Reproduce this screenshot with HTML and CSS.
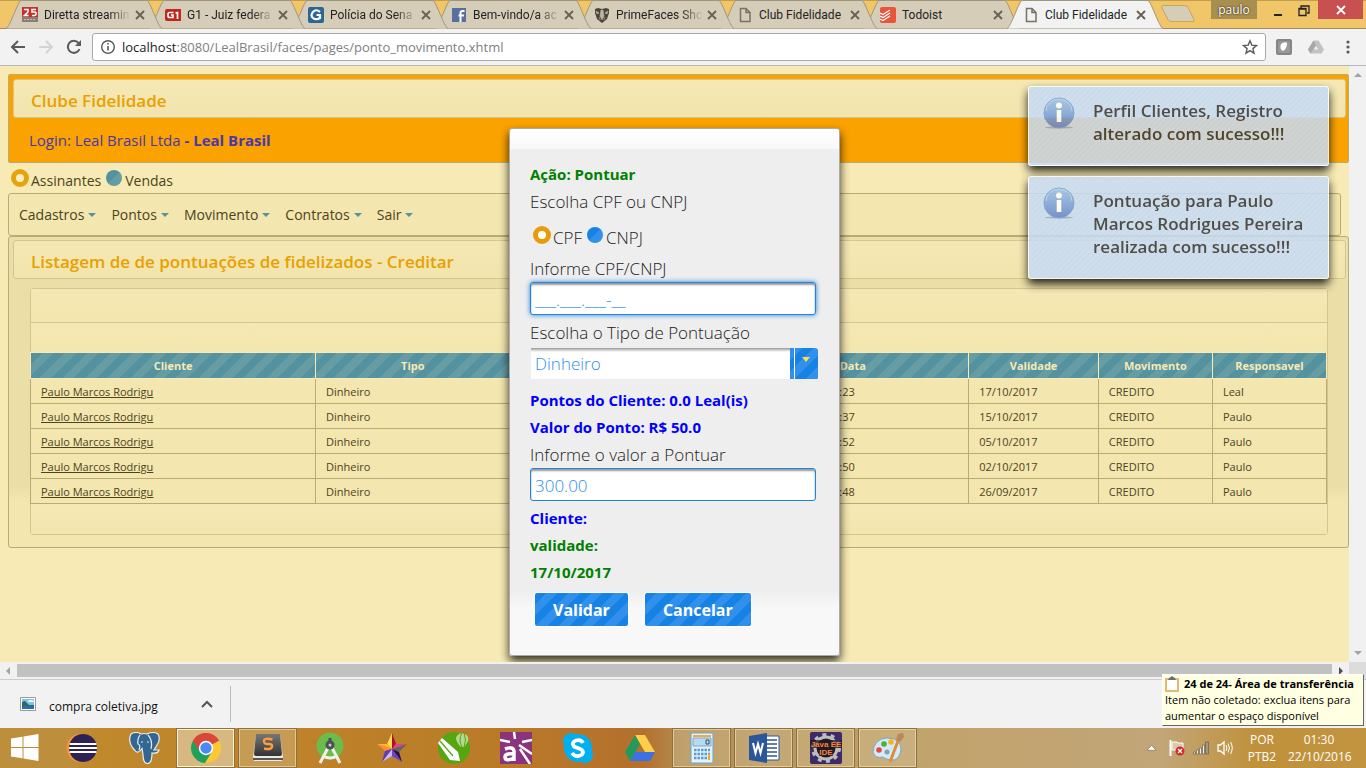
FILE: index.html
```html
<!DOCTYPE html>
<html lang="pt-BR">
<head>
<meta charset="utf-8">
<title>Club Fidelidade</title>
<link rel="stylesheet" href="styles.css">
</head>
<body>
<svg class="defs" aria-hidden="true">
  <defs>
    <linearGradient id="infoFill" x1="0" y1="0" x2="0" y2="1"><stop offset="0" stop-color="#9cc6ec"/><stop offset="1" stop-color="#5f82d0"/></linearGradient>
    <linearGradient id="keyFill" x1="0" y1="0" x2="0" y2="1"><stop offset="0" stop-color="#777"/><stop offset="1" stop-color="#333"/></linearGradient>
    <symbol id="tabshape" viewBox="0 0 156 29" preserveAspectRatio="none"><path d="M0 28.500C4 27 12 1 15 .500H141C144 1 152 27 156 28.500" /></symbol>
    <symbol id="x" viewBox="0 0 10 10"><path d="M1 1l8 8M9 1l-8 8" stroke="#666055" stroke-width="1.800"/></symbol>
    <symbol id="page" viewBox="0 0 16 16"><path d="M3.500 1.500h5.500l4 4v9H3.500zM9 1.500v4h4" fill="none" stroke="#777166" stroke-width="1.500"/></symbol>
    <symbol id="info" viewBox="0 0 32 32"><ellipse cx="16" cy="30.500" rx="14" ry="1" fill="#99a9bd"/><circle cx="16" cy="16" r="15" fill="url(#infoFill)" stroke="#6e9bd4"/><path d="M3 14a13 12 0 0 1 26 0" fill="none" stroke="#b5d4f1"/><circle cx="16" cy="8.500" r="3" fill="#fff"/><path d="M13.700 13h4.600v12h-4.600z" fill="#fff"/></symbol>
  </defs>
</svg>

<header class="tabstrip">
  <nav class="tabs" aria-label="Abas">
    <div class="tab"><svg class="shape"><use href="#tabshape"/></svg>
      <svg class="fav" viewBox="0 0 16 16"><path fill="#c9302b" d="M0 0h16v10H0z"/><path fill="#85817a" d="M0 10h16v5H0z"/><path d="M2 12.500h12" stroke="#c2bba9" stroke-dasharray="2 1"/><path d="M2 2.500h4V5L2.500 8.500H6.500M14 2.500h-4V5h2.500c2.500 0 2 3.500 0 3.500H10" fill="none" stroke="#fff" stroke-width="1.600"/></svg>
      <a class="fade" href="#">Diretta streamin</a><button aria-label="Fechar"><svg><use href="#x"/></svg></button></div>
    <div class="tab"><svg class="shape"><use href="#tabshape"/></svg>
      <svg class="fav" viewBox="0 0 16 16"><path d="M2 2h14v12H2a2 2 0 0 1-2-2V4a2 2 0 0 1 2-2z" fill="#c4241c"/><path d="M8.500 5.500h-4q-1.500 0-1.500 2v1q0 2 1.500 2h3.500V8H6M10.500 6l2-.500V12" fill="none" stroke="#fff" stroke-width="1.700"/></svg>
      <a class="fade" href="#">G1 - Juiz federa</a><button aria-label="Fechar"><svg><use href="#x"/></svg></button></div>
    <div class="tab"><svg class="shape"><use href="#tabshape"/></svg>
      <svg class="fav" viewBox="0 0 16 16"><rect width="16" height="16" rx="2" fill="#2b6795"/><path d="M12 5Q8 1.500 5 5t0 6q3 2.500 7 0V8H8.500" fill="none" stroke="#fff" stroke-width="2.200"/></svg>
      <a class="fade" href="#">Polícia do Sena</a><button aria-label="Fechar"><svg><use href="#x"/></svg></button></div>
    <div class="tab"><svg class="shape"><use href="#tabshape"/></svg>
      <svg class="fav" viewBox="0 0 16 16"><rect x="1" y="1" width="14" height="14" fill="#58709f"/><path d="M9.500 15V6q0-2 2-2h2M7.500 8.500h5.500" fill="none" stroke="#fff" stroke-width="2"/></svg>
      <a class="fade" href="#">Bem-vindo/a ac</a><button aria-label="Fechar"><svg><use href="#x"/></svg></button></div>
    <div class="tab"><svg class="shape"><use href="#tabshape"/></svg>
      <svg class="fav" viewBox="0 0 16 16"><path d="M1 2l3-1 4 1 4-1 3 1v4l-2 6-5 4-5-4L1 6z" fill="#48443c"/><path d="M7 3h2l1 6-2 4-2-4zM2 4l3 2-2 1zM14 4l-3 2 2 1zM5 10l1 3M11 10l-1 3" fill="#bdb49f" stroke="#bdb49f" stroke-width=".6"/></svg>
      <a class="fade" href="#">PrimeFaces Sho</a><button aria-label="Fechar"><svg><use href="#x"/></svg></button></div>
    <div class="tab"><svg class="shape"><use href="#tabshape"/></svg>
      <svg class="fav"><use href="#page"/></svg>
      <a href="#">Club Fidelidade</a><button aria-label="Fechar"><svg><use href="#x"/></svg></button></div>
    <div class="tab"><svg class="shape"><use href="#tabshape"/></svg>
      <svg class="fav" viewBox="0 0 16 16"><rect width="16" height="16" rx="2" fill="#e8553a"/><path d="M0 6l3 1.500L10 3M0 9l3 1.500L10 6M0 12l3 1.500L10 9" fill="none" stroke="#fff" stroke-width="1.200"/></svg>
      <a href="#">Todoist</a><button aria-label="Fechar"><svg><use href="#x"/></svg></button></div>
    <div class="tab active"><svg class="shape"><use href="#tabshape"/></svg>
      <svg class="fav"><use href="#page"/></svg>
      <a href="#">Club Fidelidade</a><button aria-label="Fechar"><svg><use href="#x"/></svg></button></div>
    <button class="newtab" aria-label="Nova aba"><svg viewBox="0 0 36 18"><path d="M3 .500h22q2 0 3 2l6 12q1 2-1 2H11q-2 0-3-2L2 3q-1-2.500 1-2.500z" fill="#d6cdb8" stroke="#c7a556"/></svg></button>
  </nav>
  <div class="window">
    <button class="user">paulo</button>
    <button class="min" aria-label="Minimizar"><svg viewBox="0 0 10 14"><path d="M1 12h8" stroke="#222" stroke-width="2"/></svg></button>
    <button class="max" aria-label="Restaurar"><svg viewBox="0 0 12 14"><path d="M3 5V3h8v7H9M1 5.500h7v7H1zM1 6h7" fill="none" stroke="#222" stroke-width="1.300"/></svg></button>
    <button class="close" aria-label="Fechar janela"><svg viewBox="0 0 10 10"><path d="M1 1l8 8M9 1l-8 8" stroke="#fff" stroke-width="1.800"/></svg></button>
  </div>
</header>

<div class="toolbar">
  <button aria-label="Voltar"><svg viewBox="0 0 16 16"><path d="M15 8H2M8 2L2 8l6 6" fill="none" stroke="#5a5a5a" stroke-width="2"/></svg></button>
  <button aria-label="Avançar"><svg viewBox="0 0 16 16"><path d="M1 8h13M8 2l6 6-6 6" fill="none" stroke="#d3d3d3" stroke-width="2"/></svg></button>
  <button aria-label="Recarregar"><svg viewBox="0 0 16 16"><path d="M13.500 10A6 6 0 1 1 12.500 4L14 5.500" fill="none" stroke="#5a5a5a" stroke-width="2"/><path d="M15 1v6H9z" fill="#5a5a5a"/></svg></button>
  <div class="address">
    <svg class="i16" viewBox="0 0 16 16"><circle cx="8" cy="8" r="6.300" fill="none" stroke="#5a5a5a" stroke-width="1.400"/><path d="M8 7v4.500M8 4v1.600" stroke="#5a5a5a" stroke-width="1.600"/></svg>
    <a href="#"><b>localhost</b>:8080/LealBrasil/faces/pages/ponto_movimento.xhtml</a>
    <svg class="i16" viewBox="0 0 16 16"><path d="M8 1.800l1.800 4.300 4.700.400-3.600 3.100 1.100 4.600L8 11.700l-4 2.500 1.100-4.600-3.600-3.100 4.700-.4z" fill="none" stroke="#5a5a5a" stroke-width="1.400"/></svg>
  </div>
  <div class="exts">
    <svg class="i16" viewBox="0 0 16 16"><rect width="16" height="16" rx="2" fill="#858585"/><rect x="2" y="2" width="12" height="12" rx="2" fill="#999"/><path d="M5 5q4-3 6-1 0 6-4 8-4-2-2-7z" fill="#fff"/></svg>
    <svg class="i16" viewBox="0 0 16 16"><path d="M5.500 1.500h5l5.500 9-2.500 4h-11L0 10.500z" fill="#c2c2c2"/><path d="M5.500 1.500L0 10.500l2.500 4L8 6z" fill="#a8a8a8"/><path d="M8 7l2 3.500H6z" fill="#f2f2f2"/></svg>
    <svg class="i16" viewBox="0 0 16 16"><g fill="#5a5a5a"><circle cx="8" cy="3" r="1.600"/><circle cx="8" cy="8" r="1.600"/><circle cx="8" cy="13" r="1.600"/></g></svg>
  </div>
</div>

<div class="viewport">
  <main class="page">
    <section class="banner">
      <h1 class="title">Clube Fidelidade</h1>
      <p>Login: Leal Brasil Ltda <b>- Leal Brasil</b></p>
    </section>
    <div class="modes">
      <input type="radio" name="modo" id="assinantes" checked><label for="assinantes">Assinantes</label>
      <input type="radio" name="modo" id="vendas"><label for="vendas">Vendas</label>
    </div>
    <nav class="menu">
      <a href="#">Cadastros</a><a href="#">Pontos</a><a href="#">Movimento</a><a href="#">Contratos</a><a href="#">Sair</a>
    </nav>
    <section class="panel">
      <h2 class="title">Listagem de de pontuações de fidelizados - Creditar</h2>
      <div class="grid">
        <div class="bar first"></div>
        <div class="bar"></div>
        <table>
          <colgroup><col class="c1"><col class="c2"><col class="c3"><col class="c4"><col class="c5"><col class="c6"><col class="c7"></colgroup>
          <thead><tr><th>Cliente</th><th>Tipo</th><th></th><th>Data</th><th>Validade</th><th>Movimento</th><th>Responsavel</th></tr></thead>
          <tbody>
            <tr><td><a href="#">Paulo Marcos Rodrigu</a></td><td>Dinheiro</td><td></td><td class="time">:23</td><td>17/10/2017</td><td>CREDITO</td><td>Leal</td></tr>
            <tr><td><a href="#">Paulo Marcos Rodrigu</a></td><td>Dinheiro</td><td></td><td class="time">:37</td><td>15/10/2017</td><td>CREDITO</td><td>Paulo</td></tr>
            <tr><td><a href="#">Paulo Marcos Rodrigu</a></td><td>Dinheiro</td><td></td><td class="time">:52</td><td>05/10/2017</td><td>CREDITO</td><td>Paulo</td></tr>
            <tr><td><a href="#">Paulo Marcos Rodrigu</a></td><td>Dinheiro</td><td></td><td class="time">:50</td><td>02/10/2017</td><td>CREDITO</td><td>Paulo</td></tr>
            <tr><td><a href="#">Paulo Marcos Rodrigu</a></td><td>Dinheiro</td><td></td><td class="time">:48</td><td>26/09/2017</td><td>CREDITO</td><td>Paulo</td></tr>
          </tbody>
        </table>
        <div class="bar last"></div>
      </div>
    </section>

    <form class="dialog" role="dialog" aria-label="Pontuar">
      <div class="dialog-head"></div>
      <div class="dialog-body">
        <p class="ok">Ação: Pontuar</p>
        <p>Escolha CPF ou CNPJ</p>
        <div class="kinds">
          <input type="radio" name="doc" id="cpf" checked><label for="cpf">CPF</label>
          <input type="radio" name="doc" id="cnpj"><label for="cnpj">CNPJ</label>
        </div>
        <label class="row" for="numero">Informe CPF/CNPJ</label>
        <input class="field focus" type="text" id="numero" value="___.___.___-__">
        <label class="row" for="tipo">Escolha o Tipo de Pontuação</label>
        <div class="combo">
          <select id="tipo"><option>Dinheiro</option></select>
          <svg viewBox="0 0 8 5"><path d="M0 0h8L4 5z" fill="#ffe04a"/></svg>
        </div>
        <p class="strong">Pontos do Cliente: 0.0 Leal(is)</p>
        <p class="strong">Valor do Ponto: R$ 50.0</p>
        <label class="row" for="valor">Informe o valor a Pontuar</label>
        <input class="field" type="text" id="valor" value="300.00">
        <p class="strong">Cliente:</p>
        <p class="ok">validade:</p>
        <p class="ok">17/10/2017</p>
        <div class="actions"><button type="button">Validar</button><button type="button">Cancelar</button></div>
      </div>
    </form>

    <div class="toasts">
      <div class="toast"><svg><use href="#info"/></svg><p>Perfil Clientes, Registro alterado com sucesso!!!</p></div>
      <div class="toast"><svg><use href="#info"/></svg><p>Pontuação para Paulo Marcos Rodrigues Pereira realizada com sucesso!!!</p></div>
    </div>
  </main>
  <div class="vscroll"><svg viewBox="0 0 8 4"><path d="M4 0l4 4H0z" fill="#a3a3a3"/></svg><svg viewBox="0 0 8 4"><path d="M0 0h8L4 4z" fill="#a3a3a3"/></svg></div>
  <div class="hscroll"><svg viewBox="0 0 4 8"><path d="M4 0v8L0 4z" fill="#a3a3a3"/></svg><span></span><svg viewBox="0 0 4 8"><path d="M0 0v8l4-4z" fill="#505050"/></svg></div>
  <div class="corner"></div>
</div>

<div class="downloads">
  <svg class="i16" viewBox="0 0 16 14"><path d="M.5.5h15v13H.5z" fill="#fff" stroke="#999"/><path d="M2 2h12v10H2z" fill="#7fc0ec"/><path d="M2 5l3-1 4 4h5v2H2z" fill="#2d6b62"/><path d="M2 9h12v3H2z" fill="#286fa9"/><path d="M8 4q3-2 6 0v1H8z" fill="#eef8ff"/></svg>
  <a href="#">compra coletiva.jpg</a>
  <button aria-label="Opções"><svg viewBox="0 0 12 8"><path d="M1 7l5-5 5 5" fill="none" stroke="#555" stroke-width="2"/></svg></button>
</div>

<footer class="taskbar">
  <button class="start" aria-label="Iniciar"><svg viewBox="0 0 28 28"><path d="M0 4.500l11.500-1.800V13H0zM12.500 2.500L27.500 0v13h-15zM0 14h11.500v10.300L0 22.500zM12.500 14h15v13l-15-2.500z" fill="#fff"/></svg></button>
  <button class="app" aria-label="Eclipse"><svg viewBox="0 0 32 32"><circle cx="15" cy="16" r="14.500" fill="#f79232"/><circle cx="17" cy="16" r="14" fill="#2c2255"/><path d="M3.500 12h27M3 16h28M3.500 20h27" stroke="#fff" stroke-width="2"/></svg></button>
  <button class="app" aria-label="PostgreSQL"><svg viewBox="0 0 32 32"><path d="M3 2Q8-1 13 2q3-1 6 0 6-3 11 0 3 5-1 11l-3 5 5 0q-1 4-7 3 0 10-4 10.500-5 .5-5-9l-1-6q-4 6-7 2Q-1 10 3 2z" fill="#336791" stroke="#e8eef3" stroke-width="1.200"/><path d="M12 3q-3 4-2 9 3 1 1 6M20 3q5 5 3 14M13 10h2M19 10h2" fill="none" stroke="#e8eef3" stroke-width="1.200"/></svg></button>
  <button class="app open on" aria-label="Chrome"><svg viewBox="0 0 32 32"><circle cx="16" cy="16" r="15" fill="#fcc934"/><path d="M16 16L3 8.500a15 15 0 0 1 26 0z" fill="#d9463a"/><path d="M3 8.500A15 15 0 0 0 15 31l7-11.500-6-3.500z" fill="#1fa15d"/><path d="M16 9h13a15 15 0 0 0-26-.500L9 18z" fill="#d9463a"/><circle cx="16" cy="16" r="7.200" fill="#fff"/><circle cx="16" cy="16" r="5.700" fill="#4a8af4"/></svg></button>
  <button class="app open" aria-label="Sublime Text"><svg viewBox="0 0 32 32"><path d="M4 3h24l3 22-1 4H2l-1-4z" fill="#e9e9e9"/><path d="M1 26h30v2H1z" fill="#555"/><path d="M4 2h24l2 20q0 2-2 2H4q-2 0-2-2z" fill="url(#keyFill)"/><path d="M20.500 7.500Q12 5.500 12 9t4.500 3q4.500 0 3.500 3t-8 1.500" fill="none" stroke="#ff9c3d" stroke-width="2.400"/></svg></button>
  <button class="app" aria-label="Android Studio"><svg viewBox="0 0 32 32"><circle cx="16" cy="14" r="13.500" fill="#6dba4d"/><path d="M15 14L6 31M17 14l9 17M9 24q7 4 14 0" fill="none" stroke="#f1f1ec" stroke-width="3"/><path d="M16 6v6" stroke="#4b5154" stroke-width="3"/><circle cx="16" cy="13" r="4.500" fill="#4b5154"/><circle cx="16" cy="13" r="1.500" fill="#ccc"/></svg></button>
  <button class="app" aria-label="StarUML"><svg viewBox="0 0 32 32"><path d="M16 17V1l4 11z" fill="#b30f2d"/><path d="M16 17V1l-5 11z" fill="#ffdc55"/><path d="M16 17L11 12H1z" fill="#ffbd17"/><path d="M16 17L1 12l8 7z" fill="#ff8a3e"/><path d="M16 17l4-5h11z" fill="#e73e8d"/><path d="M16 17l15-5-8 8z" fill="#646464"/><path d="M16 17l7 3 3 10z" fill="#281047"/><path d="M16 17l10 13-10-6z" fill="#6a40d6"/><path d="M16 17v7L6 30z" fill="#c9b8ff"/><path d="M16 17L9 19 6 30z" fill="#603abc"/></svg></button>
  <button class="app" aria-label="CorelDRAW"><svg viewBox="0 0 32 32"><circle cx="16" cy="16" r="16" fill="#56a610"/><path d="M0 11l4-5 16 14 2 9-10-1z" fill="#fff"/><path d="M2 9l13 15" stroke="#56a610" stroke-width="1.200"/><path d="M24 1q8 2 6 8-2 4-4 6h-3q-5-5-5-9 1-4 6-5z" fill="#b4da91"/><path d="M24 1q-4 7 0 14M26 1q3 7 0 14M23 17h3" stroke="#56a610" fill="none"/></svg></button>
  <button class="app" aria-label="Astah"><svg viewBox="0 0 32 32"><path fill="#8b347d" d="M0 0h32v32H0z"/><path d="M14 0l1 7M32 8l-10 2M19 13l13 9M20 17l10 15M0 8l10 2" stroke="#fff" stroke-width="2.500"/><path d="M5 17q8-3 9 2v10M14 22q-9-1-9 3 0 5 9 1" fill="none" stroke="#fff" stroke-width="3.500"/></svg></button>
  <button class="app" aria-label="Skype"><svg viewBox="0 0 32 32"><circle cx="16" cy="16" r="14" fill="#00aff0"/><circle cx="9" cy="9" r="8" fill="#00aff0"/><circle cx="23" cy="23" r="8" fill="#00aff0"/><path d="M21 11Q19 7 14 8.500t-2 6q2 1 5 2 6 2 3 6-6 4-10-1.500" fill="none" stroke="#fff" stroke-width="3.800"/></svg></button>
  <button class="app" aria-label="Google Drive"><svg viewBox="0 0 32 32"><path d="M11 3h10l10 17H21z" fill="#ffcf4a"/><path d="M11 3l5 9L6 29 1 20z" fill="#219a5c"/><path d="M11 20h20l-5 9H6z" fill="#3c71e3"/></svg></button>
  <button class="app open" aria-label="Calculadora"><svg viewBox="0 0 32 32"><rect x="5" y="1" width="22" height="30" rx="1" fill="#e2f1fb" stroke="#68a6cc"/><path d="M7 4h18" stroke="#f7a838" stroke-width="2"/><path d="M7 6h18v8H7z" fill="#b9d9ef" stroke="#7ba9c6"/><path d="M20 8h3v4h-3z" fill="none" stroke="#365068"/><path d="M8 18h16M8 22h16M8 26h16" stroke="#5c9dcc" stroke-width="2.500" stroke-dasharray="2.500 1"/><path d="M22 22h2v6h-2z" fill="#f4a42d"/></svg></button>
  <button class="app open" aria-label="Word"><svg viewBox="0 0 32 32"><path d="M17 4h14v24H17z" fill="#fff" stroke="#2b579a"/><path d="M19 8h10M19 12h10M19 16h10M19 20h10M19 24h10" stroke="#2b579a" stroke-width="1.500"/><path d="M1 4l18-3v30L1 28z" fill="#2b579a"/><path d="M5 11l2.500 10L10 12l2.500 9L15 11" fill="none" stroke="#fff" stroke-width="2"/></svg></button>
  <button class="app open" aria-label="Java EE IDE"><svg viewBox="0 0 32 32"><rect width="32" height="32" rx="2" fill="#3d2a68"/><circle cx="16" cy="16" r="11" fill="#211b2a" stroke="#bdbdbd" stroke-width="3"/><circle cx="16" cy="16" r="13.500" fill="none" stroke="#bdbdbd" stroke-width="3" stroke-dasharray="4 4.500"/><path d="M0 8h32v8H0zM9 16h14v8H9z" fill="#211b2a" opacity=".75"/><text x="16" y="15" class="jee">Java EE</text><text x="16" y="23" class="jee">IDE</text></svg></button>
  <button class="app open" aria-label="Paint"><svg viewBox="0 0 32 32"><path d="M1 20Q2 7 15 6q14 0 14 12-2 11-10 10-6-1-8-3-8 2-10-5z" fill="#d5eaf7" stroke="#7ba9c6"/><circle cx="7" cy="18" r="2.800" fill="#e8493d"/><circle cx="12" cy="12" r="2.800" fill="#4cae3d"/><circle cx="19" cy="10" r="2.800" fill="#f6b41c"/><circle cx="15" cy="20" r="2.500" fill="#7fa2b8"/><path d="M18 30L26 9" stroke="#e08a3b" stroke-width="3"/><path d="M24 8l2-6 5-1 1 4-4 5z" fill="#bd8656"/></svg></button>
  <div class="tray">
    <svg class="up" viewBox="0 0 8 5"><path d="M4 0l4 4.500H0z" fill="#fff" stroke="#6e6048" stroke-width=".5"/></svg>
    <svg class="i16" viewBox="0 0 16 16"><path d="M1.500 0v16" stroke="#fff" stroke-width="2"/><path d="M3 2h5l1 1h5v7H3z" fill="#d8cab0" stroke="#fff"/><circle cx="11" cy="11" r="4.500" fill="#d22b22"/><path d="M9 9l4 4M13 9l-4 4" stroke="#fff" stroke-width="1.300"/></svg>
    <svg class="i16" viewBox="0 0 16 16"><g fill="#eee" stroke="#5d5442" stroke-width=".6"><path d="M.5 12h2v2h-2zM3.500 10h2v4h-2zM6.500 8h2v6h-2zM9.500 5h2v9h-2z"/><path d="M12.500 2h3v12h-3z" fill="#a29883"/></g></svg>
    <svg class="i16" viewBox="0 0 16 16"><path d="M1 5h2.500L7 2v12l-3.500-3H1z" fill="none" stroke="#fff" stroke-width="1.300"/><path d="M9 5q2 3 0 6M11 3.500q3 4.500 0 9M13.500 2q3.500 6 0 12" fill="none" stroke="#fff"/></svg>
    <p class="lang">POR<br>PTB2</p>
    <p class="clock">01:30<br>22/10/2016</p>
  </div>
  <div class="tip" role="tooltip">
    <b><svg viewBox="0 0 14 16"><path d="M0 2h14v14H0z" fill="#e6b877"/><path d="M2 4h10v10H2z" fill="#fff"/><path d="M3 4q1-3 3-3 1-2 2 0 2 0 3 3z" fill="#6d6d6d"/></svg>24 de 24- Área de transferência</b>
    <span>Item não coletado: exclua itens para aumentar o espaço disponível</span>
  </div>
</footer>
</body>
</html>
```
FILE: styles.css
```css
* { box-sizing: border-box; }
html, body { height: 100%; margin: 0; }
body {
  display: flex;
  flex-direction: column;
  overflow: hidden;
  font-family: "Open Sans", "Noto Sans", sans-serif;
  font-size: 12px;
  color: #222;
}
p, h1, h2 { margin: 0; }
button { border: 0; padding: 0; background: none; font-family: inherit; color: inherit; }
a { color: inherit; text-decoration: none; }
svg { display: block; }
.defs { position: absolute; width: 0; height: 0; }
.i16 { width: 16px; height: 16px; flex: none; }

/* browser tabs */
.tabstrip {
  display: flex;
  justify-content: space-between;
  height: 29px;
  background: #f0c668;
  border-top: 1px solid #c19f50;
  border-bottom: 1px solid #9d8c65;
  flex: none;
}
.tabs { display: flex; padding-left: 6px; margin-top: -1px; }
.tab {
  position: relative;
  display: flex;
  align-items: center;
  width: 156px;
  height: 29px;
  margin-right: -13px;
  padding: 0 17px 0 16px;
  flex: none;
}
.tab:nth-child(1) { z-index: 8; }
.tab:nth-child(2) { z-index: 7; }
.tab:nth-child(3) { z-index: 6; }
.tab:nth-child(4) { z-index: 5; }
.tab:nth-child(5) { z-index: 4; }
.tab:nth-child(6) { z-index: 3; }
.tab:nth-child(7) { z-index: 2; }
.tab.active { z-index: 9; }
.shape { position: absolute; inset: 0; width: 156px; height: 29px; z-index: -1; fill: #d6cdb8; stroke: #a0957d; }
.active .shape { fill: #f2f2f2; }
.fav { width: 16px; height: 16px; flex: none; }
.tab a {
  flex: 1;
  margin-left: 6px;
  white-space: nowrap;
  font-family: Roboto, "Open Sans", sans-serif;
}
.tab .fade {
  -webkit-mask-image: linear-gradient(90deg, #000 75%, transparent);
  mask-image: linear-gradient(90deg, #000 75%, transparent);
}
.tab button { margin-left: 4px; }
.tab button svg { width: 10px; height: 10px; }
.newtab { margin-left: 10px; align-self: center; }
.newtab svg { width: 36px; height: 18px; }
.window { display: flex; align-items: flex-start; margin-top: -1px; }
.window button { height: 19px; display: flex; align-items: center; justify-content: center; }
.window .user { width: 46px; background: #a88f4f; color: #fff; font-size: 12px; text-shadow: 0 0 2px #000; }
.window .min { width: 41px; }
.window .max { width: 12px; margin-right: 8px; }
.window .close { width: 45px; margin-right: 3px; background: #c75050; }
.min svg { width: 10px; height: 14px; }
.max svg { width: 12px; height: 14px; }
.close svg { width: 10px; height: 10px; }

/* address bar */
.toolbar {
  display: flex;
  align-items: center;
  gap: 12px;
  height: 37px;
  padding: 0 10px;
  background: #f2f2f2;
  border-bottom: 1px solid #b8b8b8;
  flex: none;
}
.toolbar button svg { width: 16px; height: 16px; }
.address {
  flex: 1;
  display: flex;
  align-items: center;
  gap: 6px;
  height: 28px;
  margin-left: -2px;
  padding: 0 7px;
  background: #fff;
  border: 1px solid #a9a9a9;
  border-radius: 3px;
}
.address a { flex: 1; font-size: 13px; color: #808080; }
.address b { font-weight: 400; color: #222; }
.exts { display: flex; gap: 16px; margin-left: -2px; }

/* web page */
.viewport {
  flex: 1;
  min-height: 0;
  display: grid;
  grid-template-columns: 1fr 17px;
  grid-template-rows: 1fr 17px;
}
.page {
  position: relative;
  overflow: hidden;
  padding: 8px 0 0 8px;
  background: #f7eab4;
  color: #4c431f;
}
.banner {
  padding: 4px 2px 0 4px;
  height: 89px;
  background: #faa200;
  border: 1px solid #b9ab74;
  border-radius: 2px;
}
.title {
  padding: 0 17px;
  border: 1px solid #d3c68e;
  border-radius: 3px;
  background: linear-gradient(#f5e8b4, #f2e4ac);
  color: #e8a000;
  font-size: 17px;
  font-weight: 600;
  line-height: 41px;
  height: 39px;
}
.banner p { padding: 9px 16px; font-size: 15px; line-height: 26px; color: #4b37a8; }
.modes { display: flex; align-items: center; height: 30px; padding-left: 3px; font-size: 14px; }
.modes label, .kinds label { margin-right: 5px; padding-top: 5px; line-height: 20px; }
input[type="radio"] {
  appearance: none;
  width: 16px;
  height: 16px;
  margin: 0 3px 0 0;
  border-radius: 50%;
  background: linear-gradient(135deg, #5592a0 50%, #669ca3 50%);
}
input[type="radio"]:checked {
  width: 18px;
  height: 18px;
  margin-right: 2px;
  border: 5px solid #e8a20e;
  background: #f9efc4;
}
.menu {
  display: flex;
  align-items: center;
  gap: 15px;
  height: 43px;
  margin-right: 8px;
  padding-left: 10px;
  border: 1px solid #b9ab74;
  border-radius: 3px;
  background: #f3e6ae;
  font-size: 14px;
}
.menu a { display: flex; align-items: center; gap: 4px; }
.menu a::after { content: ""; border: 4px solid transparent; border-top-color: #4f95a7; border-bottom: 0; }
.panel {
  padding: 3px 2px 12px 4px;
  border: 1px solid #b9ab74;
  border-radius: 3px;
  background: linear-gradient(#ebdea6 80%, #f3e6ae 85%);
}
.grid {
  margin: 9px 18px 0 17px;
  border: 1px solid #d3c68e;
  border-radius: 3px;
  background: #f3e6ae;
}
.bar { height: 29px; background: linear-gradient(#f5e8b4, #f3e5ad); }
.bar.first { height: 34px; border-bottom: 1px solid #d3c68e; }
.bar.last { height: 30px; }
table { width: calc(100% + 1px); margin-left: -1px; table-layout: fixed; border-collapse: collapse; font-size: 12px; }
.c1 { width: 22%; }
.c2 { width: 15%; }
.c3 { width: 17.5%; }
.c4 { width: 17.9%; }
.c5 { width: 10%; }
.c6 { width: 8.8%; }
.c7 { width: 8.8%; }
thead {
  background: repeating-linear-gradient(135deg, #5592a0 0 8px, #669ca3 8px 16px);
  color: #f7eab4;
}
th { height: 26px; padding: 0; border: 1px solid #f7eab4; font-size: 11px; font-weight: 700; }
td { height: 25px; padding: 0 10px; border: 1px solid #b9ab74; font-size: 11px; }
td a { text-decoration: underline; }
.time { text-align: left; padding-left: 102px; }

/* dialog */
.dialog {
  position: absolute;
  top: 62px;
  left: 0;
  right: 0;
  width: 331px;
  margin: 0 auto;
  border: 1px solid #aaa;
  border-radius: 3px;
  background: linear-gradient(#eee 88%, #f8f8f8 91%);
  box-shadow: 0 5px 10px rgba(0, 0, 0, .8);
  color: #222;
  font-size: 17px;
  font-weight: 300;
}
.dialog-head { height: 20px; background: linear-gradient(#fff, #f8f8f8); border-radius: 3px 3px 0 0; }
.dialog-body { display: flex; flex-direction: column; padding: 12px 23px 28px 20px; }
.dialog-body p, .row { line-height: 27px; height: 27px; }
.dialog-body .ok, .dialog-body .strong { font-size: 15px; font-weight: 700; }
.dialog-body .ok { color: #008000; }
.dialog-body .strong { color: #00f; }
.kinds { display: flex; align-items: center; height: 40px; padding-left: 3px; }
.kinds label { padding-top: 6px; }
.dialog input[type="radio"] { background: linear-gradient(135deg, #1682e6 50%, #3090ec 50%); }
.dialog input[type="radio"]:checked { border-color: #e89b0c; background: #fff; }
.field {
  height: 33px;
  margin-bottom: 4px;
  padding: 1px 4px 0;
  border: 1px solid #1e85e2;
  border-radius: 3px;
  background: #fff;
  box-shadow: inset 0 2px 2px #999;
  color: #2b8ef0;
  font: 300 17px "Open Sans", sans-serif;
  outline: 0;
}
.field.focus { box-shadow: inset 0 2px 2px #999, 0 0 5px #1e85e2; }
.combo {
  position: relative;
  height: 32px;
  margin: 2px -2px 7px 1px;
  border-radius: 3px;
  background: repeating-linear-gradient(135deg, #1682e6 0 8px, #3090ec 8px 16px);
}
.combo select {
  appearance: none;
  width: 100%;
  height: 32px;
  padding: 0 32px 0 4px;
  border: 0;
  border-bottom: 1px solid #eee;
  background:
    linear-gradient(#fff, #fff) right 23px top / 1px 100% no-repeat,
    linear-gradient(#999, #fff 4px) left top / calc(100% - 28px) 100% no-repeat;
  color: #2b8ef0;
  font: 300 17px "Open Sans", sans-serif;
}
.combo svg { position: absolute; right: 8px; top: 9px; width: 8px; height: 5px; pointer-events: none; }
.actions { display: flex; gap: 15px; padding: 6px 4px 0; }
.actions button {
  height: 35px;
  padding: 0 18px;
  border: 1px solid #fff;
  border-radius: 3px;
  background: repeating-linear-gradient(135deg, #1682e6 0 8px, #3090ec 8px 16px);
  color: #fff;
  font-size: 16px;
  font-weight: 700;
}

/* notifications */
.toasts { position: absolute; top: 20px; right: 20px; width: 301px; display: grid; gap: 10px; }
.toast {
  display: flex;
  align-items: flex-start;
  gap: 18px;
  padding: 10px 14px 20px;
  border: 1px solid #fff;
  border-radius: 3px;
  background: repeating-linear-gradient(135deg, #c5daf4 0 2px, #c8ddf7 2px 4px);
  box-shadow: 0 5px 10px #000;
  opacity: .85;
  color: #333;
}
.toast svg { width: 32px; height: 32px; flex: none; }
.toast p { padding-top: 2px; font-size: 17px; font-weight: 600; line-height: 23px; }

/* scrollbars */
.vscroll { display: flex; flex-direction: column; align-items: center; justify-content: space-between; padding: 7px 0; background: #f1f1f1; }
.vscroll svg { width: 8px; height: 4px; }
.hscroll { display: flex; align-items: center; gap: 7px; padding: 0 6px; background: #f1f1f1; }
.hscroll svg { width: 4px; height: 8px; }
.hscroll span { flex: 1; height: 13px; background: #c1c1c1; }
.corner { background: #dcdcdc; }

.downloads {
  display: flex;
  align-items: center;
  height: 49px;
  padding-left: 20px;
  border-top: 1px solid #ccc;
  background: #f2f2f2;
  flex: none;
}
.downloads a { width: 152px; margin-left: 13px; padding-top: 5px; font-size: 12px; color: #111; }
.downloads button { height: 36px; padding-right: 17px; border-right: 1px solid #bbb; }
.downloads button svg { width: 12px; height: 8px; }

/* taskbar */
.taskbar {
  position: relative;
  display: flex;
  gap: 3px;
  height: 40px;
  background: linear-gradient(90deg, #bd8f3d 0, #bd8f3d 5%, #c0892c 7%, #ba7c28 35%, #b4702d 47%, #b38c52 50%, #c0a26a 66%, #c2a678 85%, #c0913a 92%, #c39440 100%);
  flex: none;
}
.start { width: 49px; display: grid; place-items: center; }
.start svg { width: 28px; height: 28px; }
.app { width: 59px; display: grid; place-items: center; }
.app svg { width: 32px; height: 32px; }
.app.open { border: 1px solid #8d7140; box-shadow: inset 0 0 0 1px rgba(255, 240, 200, .5); background: rgba(215, 200, 160, .35); }
.app.on { background: rgba(225, 205, 165, .7); box-shadow: inset 0 0 0 1px #fff3d5; }
.jee { font: 700 8px "Liberation Sans", sans-serif; fill: #f98232; text-anchor: middle; }
.tray { display: flex; align-items: center; gap: 8px; margin-left: auto; padding-right: 16px; color: #fff; font-size: 12px; line-height: 17px; text-align: center; }
.tray .up { width: 9px; height: 6px; margin-right: 5px; }
.lang { width: 36px; margin-left: 3px; }
.clock { width: 62px; white-space: nowrap; }

.tip {
  position: absolute;
  right: 2px;
  bottom: 42px;
  width: 202px;
  padding: 1px 2px;
  border: 1px solid #fff;
  border-right-color: #666;
  border-bottom-color: #666;
  background: #ffffe1;
  color: #000;
  line-height: 16px;
  font-size: 11px;
}
.tip b { display: flex; gap: 5px; white-space: nowrap; }
.tip b svg { width: 14px; height: 16px; flex: none; }
.tip span { display: block; }
```
